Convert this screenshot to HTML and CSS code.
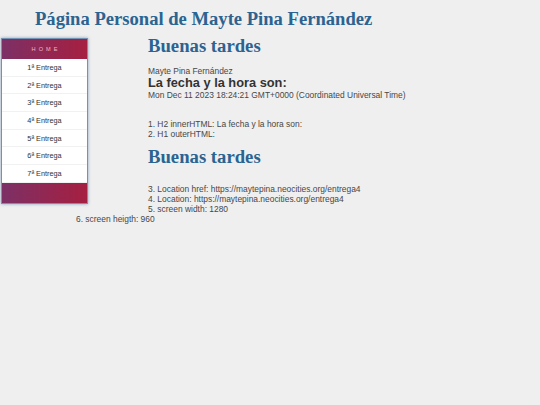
FILE: index.html
```html
<!DOCTYPE html>
<html lang="es">

<head>
    <meta charset="UTF-8">
    <meta name="viewport" content="width=device-width, initial-scale=1.0">
    <link rel="stylesheet" href="styles.css">
    <title>Entrega 4</title>
</head>

<body>
    <h1 class="titulo">Página Personal de Mayte Pina Fernández</h1>
    <div class="pagina">
        <nav class="menu">
            <div class="menu-head">HOME</div>
            <ul class="menu-list">
                <li>1ª Entrega</li>
                <li>2ª Entrega</li>
                <li>3ª Entrega</li>
                <li>4ª Entrega</li>
                <li>5ª Entrega</li>
                <li>6ª Entrega</li>
                <li>7ª Entrega</li>
            </ul>
            <div class="menu-foot"></div>
        </nav>
        <div class="contenido">
            <h2 class="saludo">Buenas tardes</h2>
            <p class="nombre">Mayte Pina Fernández</p>
            <h3 class="fecha-titulo">La fecha y la hora son:</h3>
            <p class="linea">Mon Dec 11 2023 18:24:21 GMT+0000 (Coordinated Universal Time)</p>
            <p class="linea bloque">1. H2 innerHTML: La fecha y la hora son:</p>
            <p class="linea">2. H1 outerHTML:</p>
            <h2 class="saludo copia">Buenas tardes</h2>
            <p class="linea bloque-2">3. Location href: https://maytepina.neocities.org/entrega4</p>
            <p class="linea">4. Location: https://maytepina.neocities.org/entrega4</p>
            <p class="linea">5. screen width: 1280</p>
            <p class="linea">6. screen heigth: 960</p>
        </div>
    </div>
</body>

</html>
```

FILE: styles.css
```css
body {
    margin: 0;
    background-color: #efefef;
    font-family: "Liberation Sans", Arial, sans-serif;
    color: #3a3a3a;
}

.titulo {
    margin: 8px 0 0 35px;
    font-family: "Liberation Serif", "Times New Roman", serif;
    font-size: 18.6px;
    line-height: 22px;
    color: #2b6391;
}

.menu {
    float: left;
    width: 87px;
    margin: 8px 60px 4px 1px;
    background-color: #fff;
    border: 1px solid #7393b4;
    box-sizing: border-box;
    box-shadow: 0 0 3px rgba(60, 100, 150, 0.55);
}

.menu-head,
.menu-foot {
    background: linear-gradient(to right, #7c3066, #a61f40);
}

.menu-head {
    height: 20px;
    line-height: 20px;
    text-align: center;
    font-size: 5.6px;
    letter-spacing: 3px;
    padding-left: 3px;
    color: #f2b3ca;
}

.menu-list {
    list-style: none;
    margin: 0;
    padding: 0;
}

.menu-list li {
    height: 17.7px;
    line-height: 17px;
    box-sizing: border-box;
    border-bottom: 1px solid #f1f1f1;
    text-align: center;
    font-size: 7.3px;
    color: #333;
}

.menu-foot {
    height: 20px;
}

.contenido {
    margin-left: 76px;
    padding-top: 5px;
}

.saludo {
    margin: 0;
    font-family: "Liberation Serif", "Times New Roman", serif;
    font-size: 18.7px;
    line-height: 22px;
    color: #2b6391;
}

.saludo.copia {
    margin-top: 7px;
}

.nombre,
.linea {
    margin: 0;
    font-size: 8.43px;
    line-height: 10px;
    color: #474747;
}

.nombre {
    margin-top: 8.5px;
}

.fecha-titulo {
    margin: 0;
    font-size: 12.8px;
    line-height: 14.5px;
    color: #333;
}

.bloque {
    margin-top: 18.5px;
}

.bloque-2 {
    margin-top: 16px;
}
```
